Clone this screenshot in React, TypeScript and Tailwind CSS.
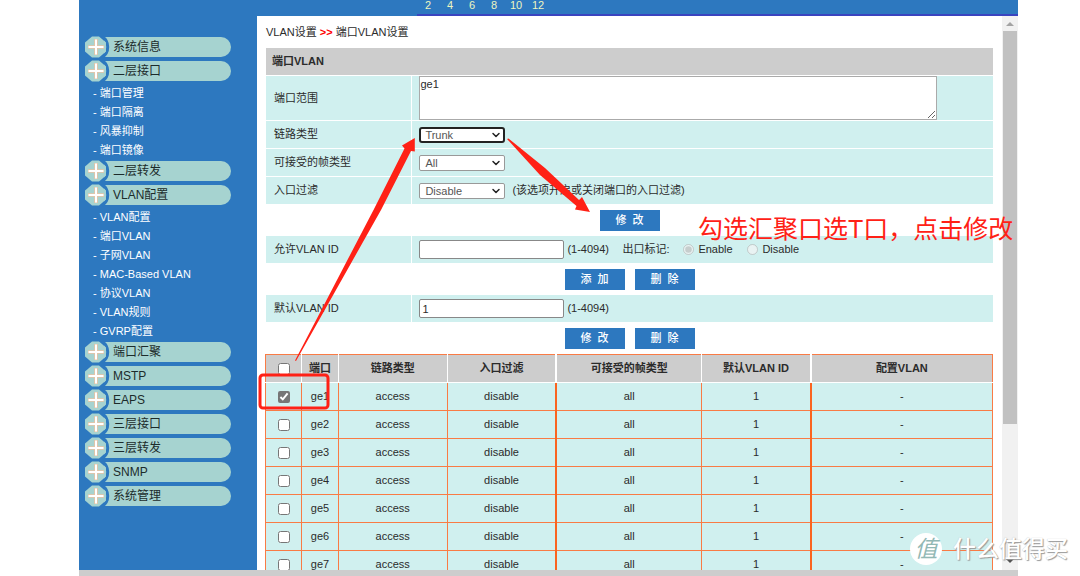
import type { ReactNode } from "react";
import { ChevronDown } from "lucide-react";

const menu = [
  { title: "系统信息" },
  { title: "二层接口", items: ["端口管理", "端口隔离", "风暴抑制", "端口镜像"] },
  { title: "二层转发" },
  {
    title: "VLAN配置",
    items: ["VLAN配置", "端口VLAN", "子网VLAN", "MAC-Based VLAN", "协议VLAN", "VLAN规则", "GVRP配置"],
  },
  { title: "端口汇聚" },
  { title: "MSTP" },
  { title: "EAPS" },
  { title: "三层接口" },
  { title: "三层转发" },
  { title: "SNMP" },
  { title: "系统管理" },
];

const ports = ["ge1", "ge2", "ge3", "ge4", "ge5", "ge6", "ge7"];

const columns = [
  { label: "端口", className: "w-[5%] border-r" },
  { label: "链路类型", className: "w-[15%] border-r" },
  { label: "入口过滤", className: "w-[15%] border-r-2" },
  { label: "可接受的帧类型", className: "w-[20%] border-r" },
  { label: "默认VLAN ID", className: "w-[15%] border-r-2" },
];

function Sidebar() {
  return (
    <nav className="w-[178px] shrink-0 bg-[#2d78bf] pl-[5px] pt-[19px]">
      {menu.map((group) => (
        <div key={group.title}>
          <a href="#" className="flex h-6 items-center text-xs text-[#1c2b2b]">
            <svg className="relative z-10 -mr-1 size-6 shrink-0 overflow-visible" viewBox="0 0 24 24">
              <path d="M18 1.5a12.5 12.5 0 0 1 0 21" fill="none" stroke="#2d78bf" strokeWidth="3" />
              <path d="M8 1.500h7l7 6v9l-7 6h-7l-7-6v-9z" fill="#a6d3d0" />
              <path d="M12 4v16M4 12h16" stroke="#e9c3a4" strokeWidth="3.6" />
              <path d="M12 4.500v15M4.500 12h15" stroke="#fff" strokeWidth="2" />
            </svg>
            <span className="flex h-5 w-[127px] items-center rounded-r-full bg-[#a6d3d0] pl-[9px]">
              {group.title}
            </span>
          </a>
          {group.items && (
            <ul>
              {group.items.map((item) => (
                <li key={item} className="h-[19px] pl-[9px] text-[11px] leading-5 text-white">
                  <a href="#">- {item}</a>
                </li>
              ))}
            </ul>
          )}
        </div>
      ))}
    </nav>
  );
}

function Field({ label, htmlFor, children }: { label: string; htmlFor: string; children: ReactNode }) {
  return (
    <div className="flex min-h-[27px] gap-px">
      <label htmlFor={htmlFor} className="flex w-1/5 items-center bg-[#d0f0ef] pl-2">
        {label}
      </label>
      <div className="flex flex-1 items-center bg-[#d0f0ef] pl-[7px]">{children}</div>
    </div>
  );
}

function Select({ id, options, active }: { id: string; options: string[]; active?: boolean }) {
  return (
    <div className="relative">
      <select
        id={id}
        className={
          active
            ? "block h-4 w-[86px] appearance-none rounded-[3px] border-2 border-[#222] bg-white pl-1 text-[11px] leading-3 text-[#555]"
            : "block h-4 w-[86px] appearance-none rounded-[2px] border border-[#999] bg-white pl-[5px] text-[11px] leading-[14px] text-[#555]"
        }
      >
        {options.map((option) => (
          <option key={option}>{option}</option>
        ))}
      </select>
      <ChevronDown
        className="pointer-events-none absolute right-[3px] top-[2px] size-3 text-[#222]"
        strokeWidth={3}
      />
    </div>
  );
}

function Actions({ labels }: { labels: string[] }) {
  return (
    <div className="flex h-8 items-center justify-center gap-[10px]">
      {labels.map((label) => (
        <button
          key={label}
          type="button"
          className="h-[21px] w-[60px] whitespace-pre bg-[#2d78bf] text-[11px] font-medium text-white"
        >
          {label}
        </button>
      ))}
    </div>
  );
}

function PortTable() {
  return (
    <table className="-ml-px w-[calc(100%+1px)] table-fixed border-collapse text-center">
      <thead>
        <tr className="h-[28px] bg-[#cdcdcd]">
          <th className="w-[5%] border border-b-white border-l-[#f97b45] border-r-white border-t-[#f97b45]">
            <input type="checkbox" aria-label="全选" className="mx-auto block size-3 accent-[#767676]" />
          </th>
          {columns.map((column) => (
            <th
              key={column.label}
              className={`border-b border-t border-b-white border-r-white border-t-[#f97b45] font-bold ${column.className}`}
            >
              {column.label}
            </th>
          ))}
          <th className="w-[25%] border-b border-r border-t border-b-white border-r-[#f97b45] border-t-[#f97b45] font-bold">
            配置VLAN
          </th>
        </tr>
      </thead>
      <tbody>
        {ports.map((port, i) => (
          <tr key={port} className="h-[28px] bg-[#d0f0ef]">
            <td className="border border-[#f97b45]">
              <input
                type="checkbox"
                aria-label={port}
                defaultChecked={i === 0}
                className="mx-auto block size-3 accent-[#767676]"
              />
            </td>
            <td className="border border-[#f97b45]">{port}</td>
            <td className="border border-[#f97b45]">access</td>
            <td className="border border-r-2 border-[#f97b45] border-r-[#fa6420]">disable</td>
            <td className="border border-[#f97b45]">all</td>
            <td className="border border-r-2 border-[#f97b45] border-r-[#fa6420]">1</td>
            <td className="border border-[#f97b45]">-</td>
          </tr>
        ))}
      </tbody>
    </table>
  );
}

function ScrollBar() {
  return (
    <div className="flex w-4 shrink-0 flex-col bg-[#f1f1f1]">
      <svg className="h-[15px] w-4 shrink-0" viewBox="0 0 16 15">
        <path d="M4 10l4-4 4 4z" fill="#a3a3a3" />
      </svg>
      <div className="mx-px flex-[3] bg-[#c1c1c1]" />
      <div className="flex-1" />
      <svg className="h-[15px] w-4 shrink-0" viewBox="0 0 16 15">
        <path d="M4 4l4 4 4-4z" fill="#505050" />
      </svg>
    </div>
  );
}

function Annotations() {
  return (
    <div className="pointer-events-none absolute inset-0 z-20">
      <svg className="h-full w-full" fill="#ff2116">
        <rect x="260" y="375" width="68" height="33" rx="3" fill="none" stroke="#ff2116" strokeWidth="3" />
        <path d="M295 360.5L373.5 210 404.5 148.5 402 145.5 414.8 138 414.8 151.5 411 151 381 210 296 361z" />
        <path d="M507 139L508.500 138.500 545 168 579 200 582 197 590 212 575 209.500 576.500 206 540 175z" />
      </svg>
      <p className="absolute left-[698px] top-[211px] whitespace-nowrap text-[25px] leading-9 text-[#ff2116]">
        勾选汇聚口选T口，点击修改
      </p>
      <div className="absolute bottom-[11px] right-[12px] flex items-center gap-[11px]">
        <span className="flex size-8 items-center justify-center rounded-full bg-white text-[23px] italic leading-8 text-[#92b8b5]">
          值
        </span>
        <span className="text-[23px] font-medium leading-8 text-white [text-shadow:1px_1px_1px_#999,0_0_1px_#bbb]">
          什么值得买
        </span>
      </div>
    </div>
  );
}

export default function App() {
  return (
    <div className="relative flex h-screen flex-col overflow-hidden bg-white pl-[79px] pr-[62px] font-['Liberation_Sans','Noto_Sans_CJK_SC',sans-serif] text-[11px] text-[#2b2b2b]">
      <header className="h-4 shrink-0 bg-[#2d78bf] pl-[338px]">
        <div className="flex h-full border-b-2 border-[#3a44bf] text-center leading-[11px] text-[#eef5c0]">
          {[2, 4, 6, 8, 10, 12].map((n) => (
            <span key={n} className="w-[22px]">
              {n}
            </span>
          ))}
        </div>
      </header>

      <div className="flex min-h-0 flex-1">
        <Sidebar />
        <main className="min-w-0 flex-1 overflow-hidden pl-[9px] pr-[9px]">
          <div className="h-8 leading-8">
            VLAN设置 <b className="text-[#f00]">&gt;&gt;</b> 端口VLAN设置
          </div>
          <form>
            <div className="flex flex-col gap-px">
              <h1 className="h-[27px] bg-[#cdcdcd] pl-[6px] font-bold leading-[27px]">端口VLAN</h1>
              <Field label="端口范围" htmlFor="range">
                <textarea
                  id="range"
                  defaultValue="ge1"
                  className="block h-11 w-[518px] border border-[#aaa] bg-white text-[11px] leading-[14px]"
                />
              </Field>
              <Field label="链路类型" htmlFor="link">
                <Select id="link" options={["Trunk", "Access"]} active />
              </Field>
              <Field label="可接受的帧类型" htmlFor="frame">
                <Select id="frame" options={["All"]} />
              </Field>
              <Field label="入口过滤" htmlFor="filter">
                <Select id="filter" options={["Disable", "Enable"]} />
                <span className="pl-[7px]">(该选项开启或关闭端口的入口过滤)</span>
              </Field>
            </div>
            <Actions labels={["修  改"]} />
            <Field label="允许VLAN ID" htmlFor="allowed">
              <input
                id="allowed"
                type="text"
                className="h-[19px] w-[145px] rounded-[2px] border border-[#888] bg-white px-[2px]"
              />
              <span className="w-[58px] pl-[3px]">(1-4094)</span>
              <span className="w-[61px]">出口标记:</span>
              <label className="flex w-16 items-center gap-1">
                <input type="radio" name="tag" defaultChecked disabled className="size-[11px]" />
                Enable
              </label>
              <label className="flex items-center gap-1">
                <input type="radio" name="tag" disabled className="size-[11px]" />
                Disable
              </label>
            </Field>
            <Actions labels={["添  加", "删  除"]} />
            <Field label="默认VLAN ID" htmlFor="default">
              <input
                id="default"
                type="text"
                defaultValue="1"
                className="h-[19px] w-[145px] rounded-[2px] border border-[#888] bg-white px-[2px]"
              />
              <span className="pl-[3px]">(1-4094)</span>
            </Field>
            <Actions labels={["修  改", "删  除"]} />
          </form>
          <PortTable />
        </main>
        <ScrollBar />
      </div>
      <footer className="h-[6px] shrink-0 bg-[#cdcdcd]" />
      <Annotations />
    </div>
  );
}
